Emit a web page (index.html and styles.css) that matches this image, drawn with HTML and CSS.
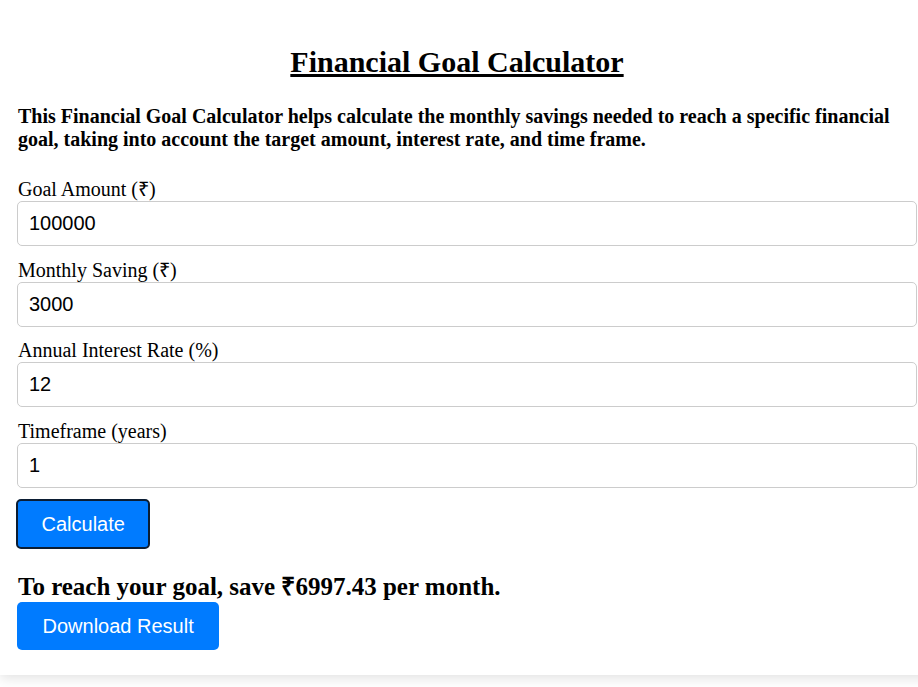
FILE: index.html
```html
<!DOCTYPE html>
<html lang="en">
  <head>
    <meta charset="UTF-8" />
    <meta name="viewport" content="width=device-width, initial-scale=1.0" />
    <title>Financial Goal Calculator</title>
    <link rel="stylesheet" href="styles.css">
  </head>
  <body>
    <div class="calculator">
      <h2 class="title">Financial Goal Calculator</h2>
      <p class="intro">
        This Financial Goal Calculator helps calculate the monthly savings needed to reach a specific financial goal, taking into account the target amount, interest rate, and time frame.
      </p>
      <div class="field">
        <label for="goal">Goal Amount (₹)</label>
        <input type="number" id="goal" value="100000" />
      </div>
      <div class="field">
        <label for="saving">Monthly Saving (₹)</label>
        <input type="number" id="saving" value="3000" />
      </div>
      <div class="field">
        <label for="rate">Annual Interest Rate (%)</label>
        <input type="number" id="rate" value="12" />
      </div>
      <div class="field">
        <label for="years">Timeframe (years)</label>
        <input type="number" id="years" value="1" />
      </div>
      <button class="btn btn-calc">Calculate</button>
      <h3 class="result">To reach your goal, save ₹6997.43 per month.</h3>
      <button class="btn btn-download">Download Result</button>
    </div>
  </body>
</html>
```

FILE: styles.css
```css
* {
  margin: 0;
  padding: 0;
  box-sizing: border-box;
}
html {
  background: #fff;
  overflow: hidden;
}
body {
  font-family: "Liberation Serif", "Times New Roman", serif;
  color: #000;
  min-height: 687px;
}
.calculator {
  width: 934px;
  padding: 42px 17px 25px 17px;
  background: #fff;
  box-shadow: 0 3px 12px rgba(0, 0, 0, 0.12);
}
.title {
  width: 880px;
  text-align: center;
  font-size: 30px;
  font-weight: bold;
  text-decoration: underline;
  line-height: 40px;
}
.intro {
  margin-top: 23px;
  padding-left: 1px;
  width: 890px;
  font-size: 20px;
  font-weight: bold;
  line-height: 23px;
}
.field {
  margin-top: 12.7px;
}
.field:first-of-type {
  margin-top: 27px;
}
.field label {
  display: block;
  padding-left: 1px;
  font-size: 20px;
  line-height: 23px;
}
.field input {
  display: block;
  width: 900px;
  height: 45px;
  padding: 0 11px;
  border: 1px solid #ccc;
  border-radius: 5px;
  font-family: "Liberation Sans", Arial, sans-serif;
  font-size: 20px;
  color: #000;
}
.btn {
  display: block;
  background: #007bff;
  color: #fff;
  border: none;
  border-radius: 5px;
  font-family: "Liberation Sans", Arial, sans-serif;
  font-size: 20px;
  line-height: 23px;
  cursor: pointer;
}
.btn-calc {
  margin-top: 11px;
  margin-left: -1px;
  padding: 11.5px 23.5px;
  border: 2px solid #0b1d33;
}
.result {
  margin-top: 24px;
  padding-left: 1px;
  font-size: 25px;
  font-weight: bold;
  line-height: 28px;
}
.btn-download {
  margin-top: 1px;
  padding: 12.5px 25.5px;
}
```
